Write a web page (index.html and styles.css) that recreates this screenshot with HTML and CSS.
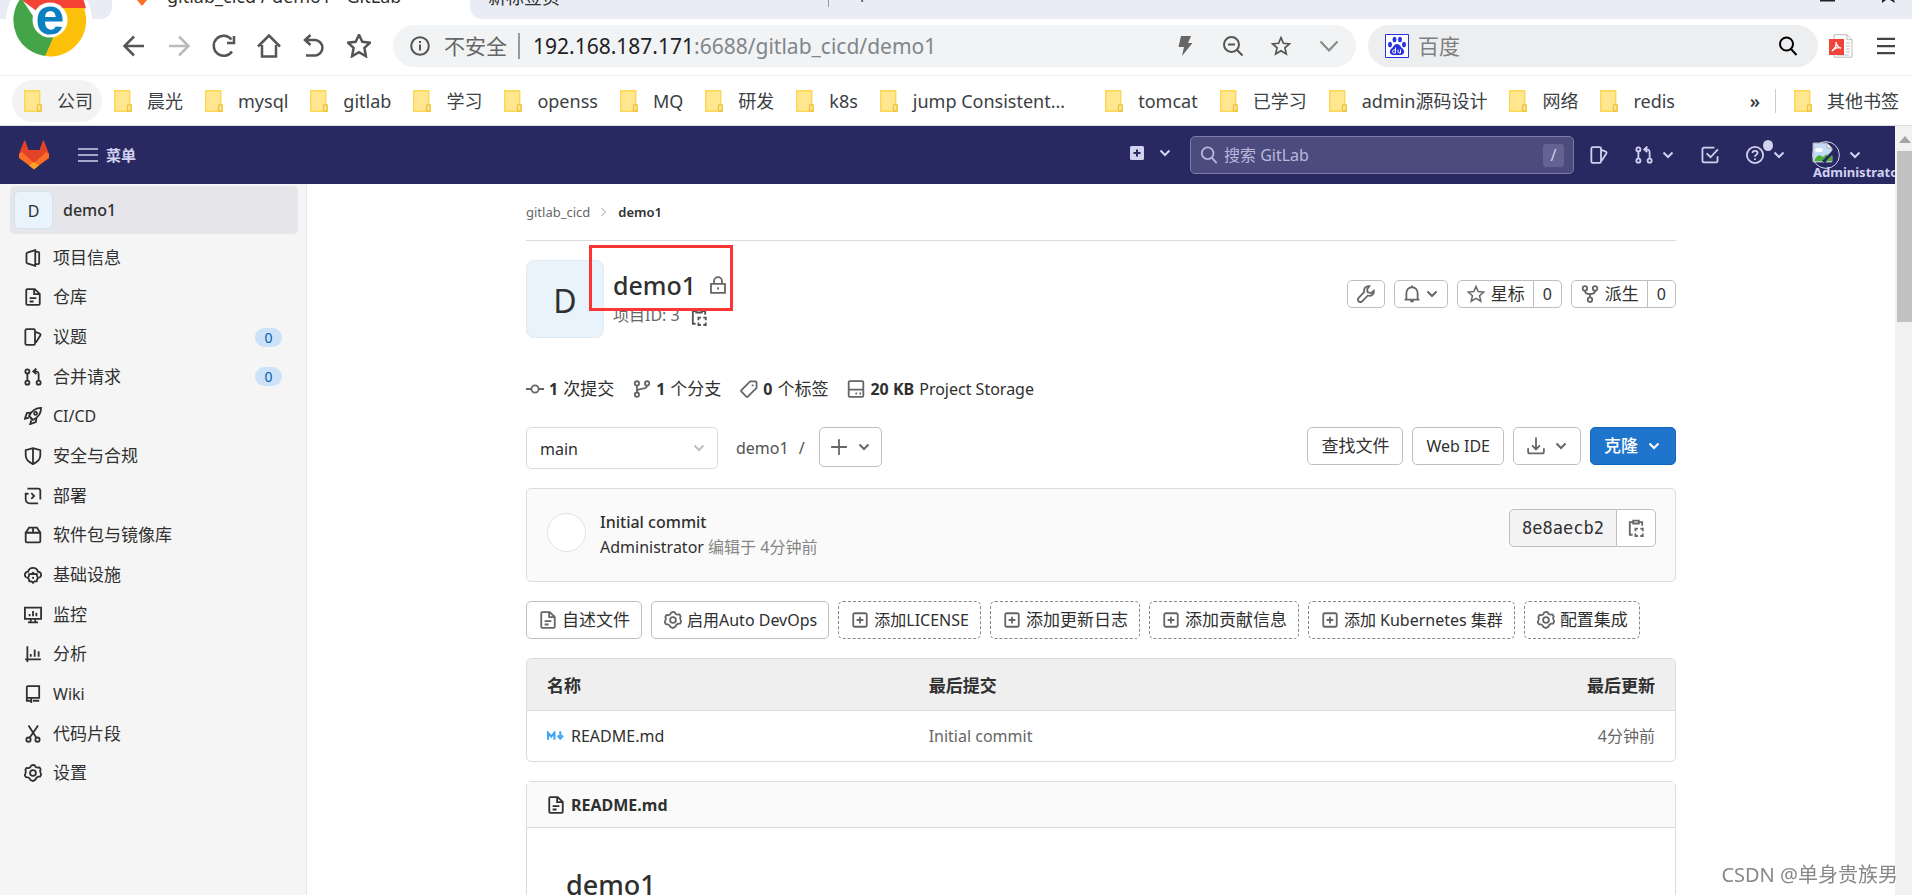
FILE: index.html
```html
<!DOCTYPE html>
<html lang="zh-CN">
<head>
<meta charset="utf-8">
<title>gitlab_cicd / demo1 - GitLab</title>
<link rel="stylesheet" href="styles.css">
</head>
<body>
<svg class="defs" aria-hidden="true">
  <symbol id="chev" viewBox="0 0 12 12"><path d="M1.5 3.5 6 8l4.500-4.500" class="s2"/></symbol>
  <symbol id="folder" viewBox="0 0 18 22"><path d="M.7.7h15v14.500h1.600v6H.7z" fill="#ffe68f" stroke="#fbd755" stroke-width="1.400"/><path d="M13.500 21v-5q0-1.500 1.800-1.500t1.800 1.500v5z" fill="#ffe68f" stroke="#ecc443" stroke-width="1.300"/></symbol>
  <symbol id="star" viewBox="0 0 24 24"><path d="m12 2 2.900 6.800 7.300.700-5.500 4.800 1.700 7.200L12 17.700l-6.400 3.800 1.700-7.200L1.800 9.500l7.300-.700z" class="s2"/></symbol>
  <symbol id="issues" viewBox="0 0 16 16"><path d="M2.500 1h6a1.300 1.300 0 0 1 1.300 1.300v11.400A1.300 1.300 0 0 1 8.500 15h-6a1.300 1.300 0 0 1-1.300-1.300V2.300A1.300 1.300 0 0 1 2.500 1zM10 3.500l4 1.500a1 1 0 0 1 .6 1.400L10.500 13" class="s"/></symbol>
  <symbol id="mr" viewBox="0 0 16 16"><circle cx="3" cy="3" r="1.800" class="s"/><circle cx="3" cy="13" r="1.800" class="s"/><circle cx="13" cy="13" r="1.800" class="s"/><path d="M3 5v6M13 11V5.500A2.500 2.500 0 0 0 10.500 3H8.500M11 .5 8.200 3 11 5.500" class="s"/></symbol>
  <symbol id="doc" viewBox="0 0 16 16"><path d="M3 1h6.500L14 5.300V14a1 1 0 0 1-1 1H3a1 1 0 0 1-1-1V2a1 1 0 0 1 1-1zM9 1v4.500h5M5 9h6M5 12h3.500" class="s"/></symbol>
  <symbol id="gear" viewBox="0 0 16 16"><path d="m8 .8 1.500.4.900 1.500 1.700.5 1.700-.2 1 1.700-.500 1.600.5 1.700.5 1.500-1 1.700-1.700.1-1.500.9-.9 1.600L8 15.200l-2.200-.900-.900-1.600-1.500-.9-1.700-.1-1-1.700.5-1.500.500-1.700L1.200 5.200l1-1.700 1.700.2 1.500-.5.900-1.600z" class="s"/><circle cx="8" cy="8" r="2.600" class="s"/></symbol>
  <symbol id="plusbox" viewBox="0 0 16 16"><rect x="2" y="2" width="12" height="12" rx="1.500" class="s"/><path d="M8 5v6M5 8h6" class="s"/></symbol>
  <symbol id="clip" viewBox="0 0 16 16"><path d="M5 2.700H2.500V14H5M11 2.700h2.500V6M5.500 1.500h5v2.500h-5z" class="s"/><path d="M7.500 10.800V8.600H9.700M11.800 8.600H14v2.200M14 12.900v2.200h-2.200M9.700 15.100H7.500v-2.200" class="s"/></symbol>
  <symbol id="fork" viewBox="0 0 16 16"><circle cx="3.500" cy="3" r="2" class="s"/><circle cx="12.500" cy="3" r="2" class="s"/><circle cx="8" cy="13" r="2" class="s"/><path d="M3.500 5c0 2.500 2 3 4.500 3s4.500-.5 4.500-3M8 8v3" class="s"/></symbol>
  <symbol id="mag" viewBox="0 0 20 20"><circle cx="8.500" cy="8" r="6.500" class="s2"/><path d="m13 13 5.500 6" class="s2"/></symbol>
</svg>

<header class="browser">
  <div class="tabs">
    <div class="tab-prev"></div>
    <div class="tab-active">
      <svg class="tab-fox" viewBox="0 0 20 18"><path d="M0 6 10 18 20 6z" fill="#fc6d26"/></svg>
      <span>gitlab_cicd / demo1 - GitLab</span>
    </div>
    <div class="tab-rest">
      <span class="tab-name">新标签页</span>
      <span class="tab-new">+</span>
      <svg class="win" viewBox="0 0 80 6"><path d="M0 0h15v1.500H0zM62 0h4l-4 3zM74 0h-4l5 3z" fill="#222"/></svg>
    </div>
  </div>
  <svg class="chrome-logo" viewBox="0 0 92 60" aria-hidden="true">
    <circle cx="49" cy="20" r="43" fill="#fff"/>
    <path d="M50 21 19-2h64l3 10z" fill="#f44336"/>
    <path d="M33 16 21-2A36 36 0 0 0 46 56l8-20z" fill="#43a547"/>
    <path d="M50 8h34A36 36 0 0 1 45 56l9-20z" fill="#fdc008"/>
    <circle cx="50" cy="20" r="17.500" fill="#fff"/>
    <text x="50" y="34" class="logo-e">e</text>
  </svg>
  <div class="toolbar">
    <div class="nav-buttons">
      <button aria-label="后退"><svg viewBox="0 0 24 24"><path d="M22 12H3M12 2.500 2.500 12l9.500 9.500" class="s3"/></svg></button>
      <button aria-label="前进" class="dim"><svg viewBox="0 0 24 24"><path d="M2 12h19M12 2.500l9.500 9.500-9.500 9.500" class="s3"/></svg></button>
      <button aria-label="刷新"><svg viewBox="0 0 24 24"><path d="M20 17.500A10 10 0 1 1 19.500 5.500M22 2v7h-7" class="s3"/></svg></button>
      <button aria-label="主页"><svg viewBox="0 0 24 24"><path d="M1 12.500 12 1.500l11 11M5 11v11.500h14V11" class="s3"/></svg></button>
      <button aria-label="恢复"><svg viewBox="0 0 24 24"><path d="M4 6h9.500a7.800 7.800 0 0 1 0 15.500H4M8.500 1 3 6l5.500 5" class="s3"/></svg></button>
      <button aria-label="收藏"><svg viewBox="0 0 24 24"><path d="m12 .8 3.300 7 7.700.900-5.600 5.200 1.500 8.300-6.900-4.100-6.900 4.100 1.500-8.300L1 8.700l7.700-.9z" class="s3"/></svg></button>
    </div>
    <div class="address">
      <svg class="i20" viewBox="0 0 20 20"><circle cx="10" cy="10" r="8.800" class="s2"/><path d="M10 8.500v6M10 5v2" class="s2"/></svg>
      <span class="unsafe">不安全</span>
      <span class="url"><b>192.168.187.171</b>:6688/gitlab_cicd/demo1</span>
      <span class="address-icons">
        <svg class="i20" viewBox="0 0 20 20"><path d="M6 0h10l-3 7h4.500L7 20l2-9H3.500z" fill="#666"/></svg>
        <svg class="i20" viewBox="0 0 20 20"><circle cx="8.500" cy="8.500" r="7.500" class="s2"/><path d="m14 14 5.500 5.500M5 8.500h7" class="s2"/></svg>
        <svg class="i20"><use href="#star"/></svg>
        <svg class="i20 soft" viewBox="0 0 20 20"><path d="m1.500 5.500 8.500 9 8.500-9" class="s2"/></svg>
      </span>
    </div>
    <div class="search-pill">
      <svg class="i24" viewBox="0 0 24 24"><path d="M.5.500h23v23H.5z" fill="#fff" stroke="#2932e1"/><g fill="#2932e1"><ellipse cx="5" cy="10.500" rx="2" ry="2.700"/><ellipse cx="9.500" cy="5.500" rx="2" ry="2.700"/><ellipse cx="15" cy="5.500" rx="2" ry="2.700"/><ellipse cx="19" cy="10.500" rx="2" ry="2.700"/><path d="M12 10c3 0 3.500 3 5.500 4.500 3 2.500 1.500 6.500-1.500 6.500h-8c-3 0-4.500-4-1.500-6.500C8.500 13 9 10 12 10z"/></g><path d="M10.500 13.500V19H9a1.500 1.500 0 0 1 0-3h1.500M13 15.500v2.500q0 1 2.500 1v-3.500" fill="none" stroke="#fff"/></svg>
      <input aria-label="搜索" placeholder="百度">
      <svg class="i20 black"><use href="#mag"/></svg>
    </div>
    <svg class="i24" viewBox="0 0 24 24"><path d="M5 .7h13l5 5v17.500H5z" fill="#fff" stroke="#bbb"/><path d="M18 .7v5h5M17 9h4M17 12h4M17 15h4M17 18h4M8 21h12" fill="none" stroke="#bbb"/><path d="M0 5h15v16H0z" fill="#f0433c"/><path d="M3 17c3-2 5-6 4-9M3 17c2-3 6-4 9-3M7 8c0 3 3 6 5 6" fill="none" stroke="#fff" stroke-width="1.400"/></svg>
    <button class="burger" aria-label="菜单"><svg viewBox="0 0 20 20"><path d="M0 2h20M0 10h20M0 18h20" class="s3"/></svg></button>
  </div>
  <nav class="bookmarks" aria-label="书签">
    <a href="#" class="on"><svg><use href="#folder"/></svg>公司</a>
    <a href="#"><svg><use href="#folder"/></svg>晨光</a>
    <a href="#"><svg><use href="#folder"/></svg>mysql</a>
    <a href="#"><svg><use href="#folder"/></svg>gitlab</a>
    <a href="#"><svg><use href="#folder"/></svg>学习</a>
    <a href="#"><svg><use href="#folder"/></svg>openss</a>
    <a href="#"><svg><use href="#folder"/></svg>MQ</a>
    <a href="#"><svg><use href="#folder"/></svg>研发</a>
    <a href="#"><svg><use href="#folder"/></svg>k8s</a>
    <a href="#" class="long"><svg><use href="#folder"/></svg>jump Consistent...</a>
    <a href="#"><svg><use href="#folder"/></svg>tomcat</a>
    <a href="#"><svg><use href="#folder"/></svg>已学习</a>
    <a href="#"><svg><use href="#folder"/></svg>admin源码设计</a>
    <a href="#"><svg><use href="#folder"/></svg>网络</a>
    <a href="#"><svg><use href="#folder"/></svg>redis</a>
    <button class="more" aria-label="更多书签">»</button>
    <a href="#" class="other"><svg><use href="#folder"/></svg>其他书签</a>
  </nav>
</header>

<div class="viewport">
  <div class="page">
    <header class="navbar">
      <svg class="fox" viewBox="0 0 30 30"><path d="M0 14 5 1q.700-1 1.300 0L9.500 10h11L23.700 1q.6-1 1.300 0l5 13-15 15z" fill="#e24329"/><path d="m0 14 3-2 12 11 12-11 3 2v4L15 29 0 18z" fill="#fc6d26"/><path d="m15 22 5 3.500-5 4-5-4z" fill="#fca326"/></svg>
      <button class="menu-btn"><svg class="i20" viewBox="0 0 20 20"><path d="M0 4h20M0 10h20M0 16h20" class="s"/></svg>菜单</button>
      <button class="nav-new" aria-label="新建"><svg class="i16" viewBox="0 0 16 16"><path d="M2.500 1h11A1.500 1.500 0 0 1 15 2.500v11a1.500 1.500 0 0 1-1.500 1.500h-11A1.500 1.500 0 0 1 1 13.500v-11A1.500 1.500 0 0 1 2.500 1z" fill="#d1d1f0"/><path d="M8 4.500v7M4.500 8h7" stroke="#292961" stroke-width="2"/></svg><svg class="i12"><use href="#chev"/></svg></button>
      <label class="gl-search"><svg class="i18"><use href="#mag"/></svg><input placeholder="搜索 GitLab" aria-label="搜索 GitLab"><kbd>/</kbd></label>
      <div class="nav-icons">
        <button aria-label="议题"><svg class="i18"><use href="#issues"/></svg></button>
        <button aria-label="合并请求"><svg class="i18"><use href="#mr"/></svg><svg class="i12"><use href="#chev"/></svg></button>
        <button aria-label="待办"><svg class="i18" viewBox="0 0 16 16"><path d="M12 1.500H2.500a1.200 1.200 0 0 0-1.200 1.200v10.600a1.200 1.200 0 0 0 1.200 1.200h11a1.200 1.200 0 0 0 1.200-1.200V9M5 6.500l3.500 3.500 6.500-7" class="s"/></svg></button>
        <button aria-label="帮助" class="help"><svg class="i18" viewBox="0 0 16 16"><circle cx="8" cy="8" r="7.200" class="s"/><path d="M5.800 6.200C5.800 3.500 10.300 3.700 10.300 6.200 10.300 7.700 8 7.700 8 9.500M8 11v1.500" class="s"/></svg><i class="dot"></i><svg class="i12"><use href="#chev"/></svg></button>
        <button class="user"><svg class="user-pic" viewBox="0 0 28 28"><path d="M1 2h14l5 5v14H1z" fill="#c5dbf7" stroke="#aaa"/><path d="M15 2v5h5z" fill="#fff" stroke="#aaa"/><path d="M2 20q4-9 9-4l4-3 1 7z" fill="#4caf36"/><ellipse cx="7" cy="9" rx="4" ry="2" fill="#fff"/><path d="m21 9-11 11 3 2 8-8z" fill="#292961"/><path d="m14 20 6-6v6z" fill="#4caf36"/><circle cx="14" cy="14" r="13.400" fill="none" stroke="#d1d1f0"/></svg><svg class="i12"><use href="#chev"/></svg><span class="user-name">Administrator</span></button>
      </div>
    </header>

    <div class="body">
      <aside class="sidebar">
        <a href="#" class="context"><span class="context-avatar">D</span>demo1</a>
        <nav class="menu" aria-label="项目">
          <a href="#"><svg class="i18" viewBox="0 0 16 16"><path d="M10 1 3 3.300a1 1 0 0 0-.8 1v7.500a1 1 0 0 0 .8 1L10 15zM10 2.500h2.500a1 1 0 0 1 1 1v9a1 1 0 0 1-1 1H10" class="s"/></svg>项目信息</a>
          <a href="#"><svg class="i18"><use href="#doc"/></svg>仓库</a>
          <a href="#"><svg class="i18"><use href="#issues"/></svg>议题<span class="badge">0</span></a>
          <a href="#"><svg class="i18"><use href="#mr"/></svg>合并请求<span class="badge">0</span></a>
          <a href="#" class="latin"><svg class="i18" viewBox="0 0 16 16"><path d="M15.200.8C10 .8 7 3 4.500 8L8 11.500c5-2.500 7.200-5.500 7.200-10.700zM6 5 2.500 5.500.8 10.500l3.500-1M11 10l-.5 3.500-5 1.700 1-3.500M5.500 9.500l1.500 1.500" class="s"/><circle cx="10.300" cy="5.700" r="1.300" class="s"/></svg>CI/CD</a>
          <a href="#"><svg class="i18" viewBox="0 0 16 16"><path d="m8 1 6.500 1.800v4.700Q14.500 12 8 15.200 1.500 12 1.500 7.500V2.800zM8 1v14" class="s"/></svg>安全与合规</a>
          <a href="#"><svg class="i18" viewBox="0 0 16 16"><path d="M3 1.500h9.500a2 2 0 0 1 2 2V9M12.500 14.500H5a3.500 3.500 0 0 1-3.500-3.500V6H4M14.500 8v3M6.500 5.500 9 8l-2.500 2.500" class="s"/></svg>部署</a>
          <a href="#"><svg class="i18" viewBox="0 0 16 16"><path d="M1.500 6h13v7.500a1 1 0 0 1-1 1h-11a1 1 0 0 1-1-1zM1.500 6l3-4.500h7l3 4.500M8 1.500V6" class="s"/></svg>软件包与镜像库</a>
          <a href="#"><svg class="i18" viewBox="0 0 16 16"><path d="M2.500 10.500C-.5 9 .8 5 3.700 5 4.500.500 11.500.500 12.300 5c2.900 0 4.200 4 1.200 5.500" class="s"/><path d="m8 6 1.300 1.200 2-.1.300 2 1 1.400-1 1.400-.3 1.700-2 .100L8 15l-1.300-1.300-2-.1-.3-1.700-1-1.400 1-1.400.3-2 2 .1z" class="s"/><circle cx="8" cy="10.500" r="1"/></svg>基础设施</a>
          <a href="#"><svg class="i18" viewBox="0 0 16 16"><path d="M.8 1.500h14.400v10H.8zM6 11.500v3M10 11.500v3M3.500 14.500h9M5 7v2M8 4.500V9M11 6v3" class="s"/></svg>监控</a>
          <a href="#"><svg class="i18" viewBox="0 0 16 16"><path d="M3 1v14M1 12.700h14M6 8v2.500M9.500 4v6.500M13 5.500v5" class="s"/></svg>分析</a>
          <a href="#" class="latin"><svg class="i18" viewBox="0 0 16 16"><path d="M3.500 1h10v10.500h-11V2a1 1 0 0 1 1-1zM2.500 11.500V14h3.500M8 14h5.500M6.500 12v4" class="s"/></svg>Wiki</a>
          <a href="#"><svg class="i18" viewBox="0 0 16 16"><circle cx="4" cy="13" r="1.900" class="s"/><circle cx="12" cy="13" r="1.900" class="s"/><path d="m4 .5 7 10.800M12.500.5 5 11.300" class="s"/></svg>代码片段</a>
          <a href="#"><svg class="i18"><use href="#gear"/></svg>设置</a>
        </nav>
      </aside>

      <main class="content">
        <nav class="crumbs" aria-label="路径"><a href="#">gitlab_cicd</a><svg viewBox="0 0 8 12"><path d="m1.500 2 4 4-4 4" fill="none" stroke="#999"/></svg><a href="#" class="here">demo1</a></nav>

        <section class="project">
          <div class="project-avatar">D</div>
          <div class="project-name">
            <div class="name-row"><h1>demo1</h1><svg class="i18" viewBox="0 0 16 16"><path d="M1.800 7h12.400v8H1.800zM4.500 7V4.500a3.500 3.500 0 0 1 7 0V7M8 10v2" class="s"/></svg></div>
            <div class="id-row">项目ID: 3<button aria-label="复制项目ID"><svg class="i18"><use href="#clip"/></svg></button></div>
            <span class="mark"></span>
          </div>
          <div class="project-actions">
            <button class="btn small square" aria-label="管理"><svg class="i18" viewBox="0 0 16 16"><path d="M11 1C8.500.5 5.500 3 6.500 6L1.500 11.500a2 2 0 0 0 3 3l5.200-5.200C12.500 10.500 15.500 8 15 5l-2.500 2.200-3-.7-.5-2.800z" class="s"/></svg></button>
            <button class="btn small bell" aria-label="通知"><svg class="i18" viewBox="0 0 16 16"><path d="M1.500 13h13M3 13V7a5 5 0 0 1 10 0v6M6.500 14.500h3M8 .500V2" class="s"/></svg><svg class="i12"><use href="#chev"/></svg></button>
            <div class="split cjk"><button class="btn small"><svg class="i18"><use href="#star"/></svg>星标</button><a href="#" class="btn small count">0</a></div>
            <div class="split cjk"><button class="btn small"><svg class="i18"><use href="#fork"/></svg>派生</button><a href="#" class="btn small count">0</a></div>
          </div>
        </section>

        <div class="stats">
          <a href="#"><svg class="i18" viewBox="0 0 16 16"><circle cx="8" cy="8" r="3.200" class="s"/><path d="M0 8h4.800M11.200 8H16" class="s"/></svg><b>1</b><span class="cjk">次提交</span></a>
          <a href="#"><svg class="i18" viewBox="0 0 16 16"><circle cx="3.500" cy="3" r="1.900" class="s"/><circle cx="3.500" cy="13" r="1.900" class="s"/><circle cx="12.500" cy="3" r="1.900" class="s"/><path d="M3.500 5v6M3.700 10c0-3 8.800-1 8.800-5" class="s"/></svg><b>1</b><span class="cjk">个分支</span></a>
          <a href="#"><svg class="i18" viewBox="0 0 16 16"><path d="M9 1.200h4.700a1 1 0 0 1 1 1V7L7 14.700a1 1 0 0 1-1.400 0L1.300 10.400a1 1 0 0 1 0-1.400zM11.200 4v1.500" class="s"/></svg><b>0</b><span class="cjk">个标签</span></a>
          <a href="#"><svg class="i18" viewBox="0 0 16 16"><path d="M2.500 1h11a1 1 0 0 1 1 1v12a1 1 0 0 1-1 1h-11a1 1 0 0 1-1-1V2a1 1 0 0 1 1-1zM1.500 8.500h13M7.500 12H9M11 12h1.500" class="s"/></svg><b>20 KB</b><span>Project Storage</span></a>
        </div>

        <div class="tree-bar">
          <div class="branch"><select aria-label="分支"><option>main</option></select><svg class="i12"><use href="#chev"/></svg></div>
          <span class="tree-path"><a href="#">demo1</a><span>/</span></span>
          <button class="btn add" aria-label="添加"><svg class="i18" viewBox="0 0 16 16"><path d="M8 1v14M1 8h14" class="s"/></svg><svg class="i12"><use href="#chev"/></svg></button>
          <div class="tree-actions">
            <a href="#" class="btn cjk">查找文件</a>
            <a href="#" class="btn">Web IDE</a>
            <button class="btn" aria-label="下载"><svg class="i18" viewBox="0 0 16 16"><path d="M8 .500V11M4.500 7.500 8 11l3.500-3.500M1 10v3a1.500 1.500 0 0 0 1.500 1.500h11A1.500 1.500 0 0 0 15 13v-3" class="s"/></svg><svg class="i12"><use href="#chev"/></svg></button>
            <button class="btn primary cjk">克隆<svg class="i12"><use href="#chev"/></svg></button>
          </div>
        </div>

        <section class="commit">
          <span class="commit-avatar"></span>
          <div class="commit-text"><a href="#" class="commit-title">Initial commit</a><div><a href="#">Administrator</a> <span>编辑于 4分钟前</span></div></div>
          <div class="split sha"><span class="btn">8e8aecb2</span><button class="btn" aria-label="复制"><svg class="i18"><use href="#clip"/></svg></button></div>
        </section>

        <div class="quick">
          <a href="#" class="btn cjk"><svg class="i18"><use href="#doc"/></svg>自述文件</a>
          <a href="#" class="btn"><svg class="i18"><use href="#gear"/></svg>启用Auto DevOps</a>
          <a href="#" class="btn dashed"><svg class="i18"><use href="#plusbox"/></svg>添加LICENSE</a>
          <a href="#" class="btn dashed cjk"><svg class="i18"><use href="#plusbox"/></svg>添加更新日志</a>
          <a href="#" class="btn dashed cjk"><svg class="i18"><use href="#plusbox"/></svg>添加贡献信息</a>
          <a href="#" class="btn dashed"><svg class="i18"><use href="#plusbox"/></svg>添加 Kubernetes 集群</a>
          <a href="#" class="btn dashed cjk"><svg class="i18"><use href="#gear"/></svg>配置集成</a>
        </div>

        <div class="files">
          <table>
            <thead><tr><th>名称</th><th>最后提交</th><th>最后更新</th></tr></thead>
            <tbody><tr><td><a href="#"><svg class="md" viewBox="0 0 16 8"><path d="M1 8V1.500L4 5l3-3.500V8M12.500 0v5M10 4l2.500 3L15 4" fill="none" stroke="#42a5f5" stroke-width="2"/></svg>README.md</a></td><td>Initial commit</td><td>4分钟前</td></tr></tbody>
          </table>
        </div>

        <article class="readme">
          <header><svg class="i18"><use href="#doc"/></svg>README.md</header>
          <h2>demo1</h2>
        </article>
      </main>
    </div>
  </div>
  <div class="scrollbar"><svg viewBox="0 0 15 25"><path d="m2 17 6-7 6 7z" fill="#a3a3a3"/></svg><div class="thumb"></div></div>
</div>
<div class="watermark">CSDN @单身贵族男</div>
</body>
</html>
```
FILE: styles.css
```css
* { box-sizing: border-box; }

body {
  margin: 0;
  height: 100vh;
  overflow: hidden;
  display: flex;
  flex-direction: column;
  font: 16px/24px "Noto Sans", "Noto Sans CJK SC", sans-serif;
  color: #303030;
  background: #fff;
}

a { color: inherit; text-decoration: none; }
button { font: inherit; color: inherit; background: none; border: 0; padding: 0; display: flex; align-items: center; }
input, select { font: inherit; color: inherit; border: 0; background: none; padding: 0; outline: 0; }
svg { flex: none; fill: currentColor; }
.defs { position: absolute; width: 0; height: 0; }
.s, .s2, .s3 { fill: none; stroke: currentColor; stroke-width: 1.6px; }
.s2 { stroke-width: 2px; }
.s3 { stroke-width: 2.5px; }
.i12 { width: 12px; height: 12px; }
.i16 { width: 16px; height: 16px; }
.i18 { width: 18px; height: 18px; }
.i20 { width: 20px; height: 20px; }
.i24 { width: 24px; height: 24px; }
.cjk { font-size: 17px; }

/* Browser chrome */
.browser { position: relative; flex: none; border-bottom: 1px solid #ddd; }
.tabs { display: flex; height: 19px; overflow: hidden; font-size: 18px; line-height: 20px; }
.tab-prev { width: 112px; background: #eaecf5; border-radius: 0 0 12px 0; }
.tab-active { width: 358px; display: flex; align-items: flex-end; gap: 15px; padding: 0 20px 13px; white-space: nowrap; }
.tab-fox { width: 20px; height: 18px; }
.tab-rest { flex: 1; display: flex; align-items: flex-end; background: #eaecf5; border-radius: 0 0 0 12px; padding: 0 12px 12px 18px; }
.tab-name { width: 341px; border-right: 1px solid #999; }
.tab-new { margin-left: 28px; }
.win { width: 80px; height: 6px; margin: 0 0 1px auto; }
.chrome-logo { position: absolute; left: 0; top: 0; width: 92px; height: 60px; }
.logo-e { font: bold 52px "Liberation Sans", sans-serif; fill: #0b7fbf; text-anchor: middle; }

.toolbar { display: flex; align-items: center; height: 57px; padding: 0 17px 2px 122px; border-bottom: 1px solid #eee; color: #555; }
.nav-buttons { display: flex; gap: 21px; width: 271px; }
.nav-buttons svg { width: 24px; height: 24px; }
.dim { color: #bbb; }
.soft { color: #888; }
.address, .search-pill { display: flex; align-items: center; height: 42px; border-radius: 21px; background: #f1f3f4; font-size: 21px; line-height: 26px; }
.address { flex: 1; padding: 0 17px; }
.unsafe { margin-left: 14px; padding-right: 11px; border-right: 2px solid #999; color: #666; }
.url { margin-left: 13px; color: #80868b; white-space: nowrap; }
.url b { font-weight: 400; color: #202124; }
.address-icons { display: flex; gap: 28px; margin-left: auto; }
.search-pill { width: 450px; margin: 0 11px 0 12px; padding: 0 20px 0 17px; background: #edeef0; gap: 9px; }
.search-pill input { flex: 1; min-width: 0; }
.search-pill input::placeholder { color: #808080; opacity: 1; }
.black { color: #000; }
.burger { margin-left: 24px; color: #444; }
.burger svg { width: 18px; height: 22px; }

.bookmarks { display: flex; align-items: center; height: 49px; padding: 0 13px 0 12px; font-size: 18px; white-space: nowrap; color: #3c4043; }
.bookmarks a { display: flex; align-items: center; height: 42px; gap: 15px; padding: 0 10px 0 12px; }
.bookmarks svg { width: 18px; height: 22px; }
.bookmarks .on { background: #f3f3f3; border-radius: 21px; padding-right: 9px; }
.bookmarks .long { padding-right: 28px; }
.more { margin-left: auto; padding-right: 15px; font-weight: 600; }
.bookmarks .other { height: 24px; padding: 0 0 0 18px; border-left: 1px solid #ccc; }

/* GitLab page */
.viewport { flex: 1; min-height: 0; display: flex; }
.page { flex: 1; min-width: 0; display: flex; flex-direction: column; overflow: hidden; }
.scrollbar { width: 17px; padding-left: 2px; background: #f1f1f1; }
.scrollbar svg { display: block; width: 15px; height: 25px; }
.thumb { height: 171px; background: #c1c1c1; }

.navbar { flex: none; display: flex; align-items: center; height: 58px; padding: 0 34px 0 19px; background: #292961; color: #d1d1f0; overflow: hidden; }
.fox { width: 30px; height: 30px; }
.menu-btn { margin-left: 29px; gap: 8px; font-size: 15px; font-weight: 700; }
.nav-new { margin-left: auto; gap: 14px; padding-bottom: 4px; }
.gl-search { display: flex; align-items: center; width: 384px; height: 38px; margin: 0 16px 0 19px; padding: 0 9px; gap: 6px; border: 1px solid #7b7ba8; border-radius: 5px; background: #4c4b7e; color: #b8b8dc; }
.gl-search input { flex: 1; min-width: 0; }
.gl-search input::placeholder { color: #b8b8dc; opacity: 1; }
kbd { width: 21px; height: 23px; border-radius: 3px; background: #636291; color: #d1d1f0; font: inherit; line-height: 23px; text-align: center; }
.nav-icons { display: flex; gap: 27px; }
.nav-icons button { position: relative; gap: 9px; }
.dot { position: absolute; left: 17px; top: -1px; width: 10px; height: 11px; border-radius: 50%; background: #d1d1f0; }
.user-pic { width: 28px; height: 28px; }
.user-name { position: absolute; left: 1px; top: 22px; font-size: 13px; line-height: 18px; font-weight: 700; }

.body { flex: 1; min-height: 0; display: flex; overflow: hidden; }
.sidebar { flex: none; width: 307px; padding: 2px 8px 0 10px; border-right: 1px solid #e6e6e6; background: #f5f5f5; }
.context { display: flex; align-items: center; gap: 10px; height: 48px; padding: 0 4px; border-radius: 5px; background: #e5e5ea; font-weight: 500; }
.context-avatar { width: 39px; height: 38px; border: 1px solid #d5e3ef; border-radius: 5px; background: #e9f3fc; line-height: 38px; text-align: center; font-weight: 400; }
.menu { display: grid; height: 555px; margin-top: 4px; font-size: 17px; }
.menu a { display: flex; align-items: center; gap: 11px; padding: 0 16px 0 14px; }
.menu .latin { font-size: 16px; }
.badge { width: 27px; height: 19px; margin-left: auto; border-radius: 10px; background: #cbe2f9; color: #0b5cad; font-size: 14px; line-height: 19px; text-align: center; }

.content { flex: 1; max-width: 1150px; margin: 0 auto; }
.crumbs { display: flex; align-items: center; gap: 10px; height: 57px; border-bottom: 1px solid #dbdbdb; font-size: 13px; color: #666; }
.crumbs svg { width: 8px; height: 12px; }
.here { color: #303030; font-weight: 600; }
.project { display: flex; margin-top: 19px; gap: 9px; }
.project-avatar { width: 78px; height: 78px; border: 1px solid #e3eaf0; border-radius: 8px; background: #e9f3fc; font-size: 32px; line-height: 80px; text-align: center; }
.project-name { position: relative; padding-top: 9px; }
.name-row { display: flex; align-items: center; gap: 13px; color: #666; }
h1, h2 { margin: 0; font-size: 25px; line-height: 32px; font-weight: 500; color: #303030; }
.id-row { display: flex; align-items: center; gap: 10px; height: 28px; color: #666; }
.id-row button { color: #525252; padding-top: 4px; }
.mark { position: absolute; left: -24px; top: -15px; width: 144px; height: 66px; border: 3px solid #fa3534; }
.project-actions { display: flex; align-items: flex-start; gap: 9px; margin: 20px 0 0 auto; }

.btn { display: inline-flex; align-items: center; height: 38px; padding: 0 13px; gap: 6px; border: 1px solid #bfbfbf; border-radius: 5px; background: #fff; white-space: nowrap; }
.btn svg { color: #666; }
.small { height: 28px; }
.small.square { width: 38px; padding: 0; justify-content: center; }
.small.bell { gap: 5px; padding: 0 9px 0 8px; }
.split { display: flex; }
.split .btn:first-child { border-radius: 5px 0 0 5px; padding: 0 8px 0 9px; }
.split .btn:last-child { border-radius: 0 5px 5px 0; margin-left: -1px; padding: 0 9px; }
.count { font-size: 16px; }
.dashed { border: 1px dashed #868686; }

.stats { display: flex; gap: 19px; margin: 39px 0 26px; }
.stats a { display: flex; align-items: center; gap: 5px; }
.stats svg { color: #666; }
.stats b { font-weight: 700; }
.tree-bar { display: flex; align-items: flex-start; }
.branch { position: relative; width: 192px; }
.branch select { width: 100%; height: 42px; padding: 1px 13px 0; border: 1px solid #dbdbdb; border-radius: 5px; appearance: none; }
.branch svg { position: absolute; right: 13px; top: 15px; color: #bfbfbf; pointer-events: none; }
.tree-path { display: flex; gap: 10px; margin: 9px 14px 0 18px; color: #525252; }
.tree-bar .add { height: 40px; gap: 10px; padding: 0 11px 0 10px; }
.tree-actions { display: flex; gap: 9px; margin-left: auto; }
.tree-actions button { gap: 10px; }
.tree-actions .primary { padding: 0 15px 0 13px; border-color: #1068bf; background: #1f75cb; color: #fff; font-weight: 500; }
.tree-actions .primary svg { color: #fff; }

.commit { display: flex; height: 94px; margin: 19px 0; padding: 20px 19px 0 20px; border: 1px solid #dbdbdb; border-radius: 5px; background: #fafafa; }
.commit-avatar { width: 39px; height: 39px; margin: 4px 14px 0 0; border: 1px solid #e3e3e3; border-radius: 50%; background: #fff; }
.commit-title { font-weight: 500; }
.commit-text { padding-top: 1px; line-height: 25px; }
.commit-text span { color: #868686; }
.sha { margin-left: auto; }
.sha .btn:first-child { padding: 0 12px; background: #f3f3f3; font: 17px "DejaVu Sans Mono", monospace; }
.sha .btn:last-child { padding: 0 10px; }
.quick { display: flex; gap: 9px; }
.quick .btn { padding: 0 11px 0 12px; gap: 5px; }

.files { margin: 19px 0; border: 1px solid #dbdbdb; border-radius: 5px; overflow: hidden; }
table { width: 100%; border-collapse: collapse; table-layout: fixed; }
th, td { height: 51px; padding: 0 20px; text-align: left; color: #666; }
th { padding-top: 3px; background: #efefef; border-bottom: 1px solid #dbdbdb; font-size: 17px; color: #303030; }
th:nth-child(2), td:nth-child(2) { padding-left: 19px; }
th:last-child, td:last-child { text-align: right; }
td a { display: flex; align-items: center; gap: 7px; color: #303030; }
.md { width: 17px; height: 9px; }
.readme { height: 200px; border: 1px solid #dbdbdb; border-radius: 5px 5px 0 0; }
.readme header { display: flex; align-items: center; height: 46px; padding: 0 20px; gap: 6px; border-bottom: 1px solid #dbdbdb; background: #fafafa; font-weight: 700; }
.readme h2 { margin: 41px 39px; font-size: 27px; }
.watermark { position: fixed; right: 14px; bottom: 6px; font-size: 20px; line-height: 28px; color: #888; text-shadow: 1px 1px #fff; }
```
